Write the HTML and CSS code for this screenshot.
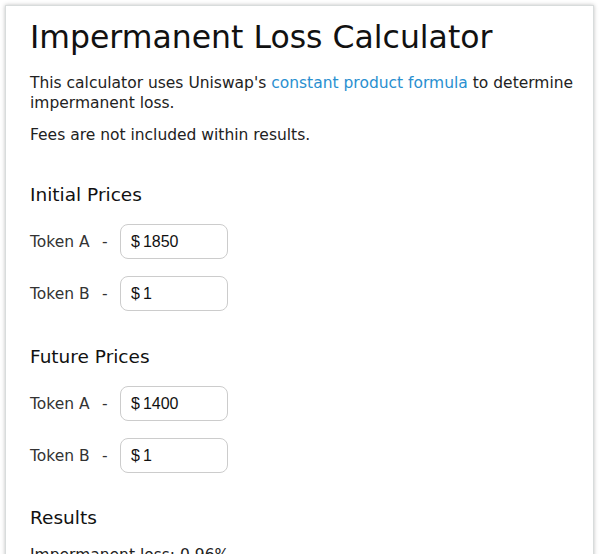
FILE: index.html
```html
<!DOCTYPE html>
<html lang="en">
<head>
  <meta charset="UTF-8" />
  <meta name="viewport" content="width=device-width, initial-scale=1.0"/>
  <title>Impermanent Loss Calculator</title>
  <link rel="stylesheet" href="styles.css">
</head>
<body>
  <div class="card">
    <h1>Impermanent Loss Calculator</h1>
    <p class="intro">This calculator uses Uniswap's <a href="#">constant product formula</a> to determine impermanent loss.</p>
    <p class="note">Fees are not included within results.</p>

    <h3>Initial Prices</h3>
    <div class="row">
      <span class="label">Token A</span><span class="dash">-</span>
      <div class="price"><span>$</span><input type="text" value="1850"></div>
    </div>
    <div class="row">
      <span class="label">Token B</span><span class="dash">-</span>
      <div class="price"><span>$</span><input type="text" value="1"></div>
    </div>

    <h3>Future Prices</h3>
    <div class="row">
      <span class="label">Token A</span><span class="dash">-</span>
      <div class="price"><span>$</span><input type="text" value="1400"></div>
    </div>
    <div class="row">
      <span class="label">Token B</span><span class="dash">-</span>
      <div class="price"><span>$</span><input type="text" value="1"></div>
    </div>

    <h3 class="results">Results</h3>
    <p class="result">Impermanent loss: 0.96%</p>
  </div>
</body>
</html>
```

FILE: styles.css
```css
body {
  margin: 0;
  padding: 5px 6px 0 5px;
  background: #fff;
  font-family: "DejaVu Sans", sans-serif;
  color: #222;
}
.card {
  border: 1px solid #d8dcdc;
  box-shadow: 0 0 4px rgba(0, 0, 0, 0.25);
  padding: 12px 10px 40px 24px;
  min-height: 600px;
}
h1 {
  font-size: 31.5px;
  line-height: 38px;
  font-weight: 400;
  margin: 0 0 17px;
  color: #111;
}
p {
  font-size: 15.5px;
  line-height: 20px;
  margin: 0 0 12px;
}
a {
  color: #2a8fd0;
  text-decoration: none;
}
.note {
  margin-bottom: 39px;
}
h3 {
  font-size: 18.5px;
  line-height: 22px;
  font-weight: 500;
  margin: 0 0 18px;
  color: #111;
}
.row {
  display: flex;
  align-items: center;
  margin-bottom: 17px;
  font-size: 15.5px;
  color: #333;
}
.label {
  width: 72px;
}
.dash {
  width: 18px;
}
.price {
  display: flex;
  align-items: center;
  width: 96px;
  height: 33px;
  border: 1px solid #ccc;
  border-radius: 8px;
  padding-left: 10px;
  font-family: "Liberation Sans", Arial, sans-serif;
  font-size: 16px;
  color: #111;
}
.price input {
  border: none;
  outline: none;
  width: 70px;
  padding: 0 0 0 3px;
  font: inherit;
  color: inherit;
}
.row + h3 {
  margin-top: 35px;
}
.row + h3.results {
  margin-top: 34px;
}
h3 + .result {
  margin-top: -2px;
}
```
